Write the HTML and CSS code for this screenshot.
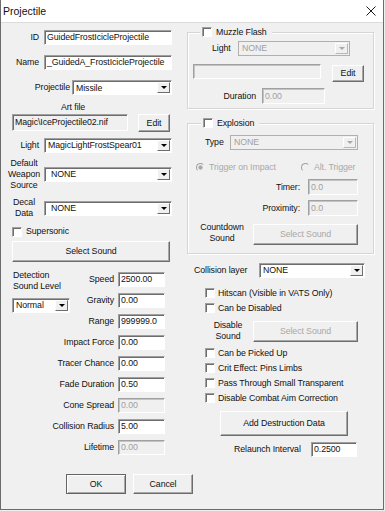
FILE: index.html
```html
<!DOCTYPE html>
<html lang="en">
<head>
  <meta charset="UTF-8">
  <title>Projectile</title>
  <link rel="stylesheet" href="styles.css">
</head>
<body>
  <div class="window">
    <div class="titlebar">
      <span class="title">Projectile</span>
      <svg class="close" width="10" height="10" viewBox="0 0 10 10">
        <path d="M0.5 0.5L9.5 9.5M9.5 0.5L0.5 9.5" stroke="#1a1a1a" stroke-width="1"/>
      </svg>
    </div>

    <div class="panes">
      <!-- left column -->
      <div class="pane-left">
        <div class="row">
          <span class="lbl lbl-main">ID</span>
          <span class="field w128">GuidedFrostIcicleProjectile</span>
        </div>
        <div class="row r-name">
          <span class="lbl lbl-main">Name</span>
          <span class="field w128">_GuidedA_FrostIcicleProjectile</span>
        </div>
        <div class="row r-proj">
          <span class="lbl lbl-proj">Projectile</span>
          <span class="select w100 h16"><span class="select-text">Missile</span><span class="select-btn"></span></span>
        </div>
        <div class="art-label">Art file</div>
        <div class="row r-art">
          <span class="field grey w116 h17">Magic\IceProjectile02.nif</span>
          <span class="btn btn-art">Edit</span>
        </div>
        <div class="row r-light">
          <span class="lbl lbl-main">Light</span>
          <span class="select w128"><span class="select-text">MagicLightFrostSpear01</span><span class="select-btn"></span></span>
        </div>
        <div class="row r-weapon">
          <span class="lbl lbl-stack">Default<br>Weapon<br>Source</span>
          <span class="select w128"><span class="select-text pad">NONE</span><span class="select-btn"></span></span>
        </div>
        <div class="row r-decal">
          <span class="lbl lbl-stack">Decal<br>Data</span>
          <span class="select w128"><span class="select-text pad">NONE</span><span class="select-btn"></span></span>
        </div>
        <div class="row r-super">
          <span class="check"></span>
          <span class="check-text">Supersonic</span>
        </div>
        <div class="btn btn-sound">Select Sound</div>

        <div class="stats">
          <div class="detect">
            <div class="detect-label">Detection<br>Sound Level</div>
            <span class="select w58 h14"><span class="select-text">Normal</span><span class="select-btn"></span></span>
          </div>
          <div class="stat"><span class="stat-lbl">Speed</span><span class="field w47">2500.00</span></div>
          <div class="stat"><span class="stat-lbl">Gravity</span><span class="field w47">0.00</span></div>
          <div class="stat"><span class="stat-lbl">Range</span><span class="field w47">999999.0</span></div>
          <div class="stat"><span class="stat-lbl">Impact Force</span><span class="field w47">0.00</span></div>
          <div class="stat"><span class="stat-lbl">Tracer Chance</span><span class="field w47">0.00</span></div>
          <div class="stat"><span class="stat-lbl">Fade Duration</span><span class="field w47">0.50</span></div>
          <div class="stat"><span class="stat-lbl">Cone Spread</span><span class="field off w47">0.00</span></div>
          <div class="stat"><span class="stat-lbl">Collision Radius</span><span class="field w47">5.00</span></div>
          <div class="stat"><span class="stat-lbl">Lifetime</span><span class="field off w47">0.00</span></div>
        </div>
      </div>

      <!-- right column -->
      <div class="pane-right">
        <div class="group g-muzzle">
          <div class="group-head head-muzzle"><span class="check"></span><span>Muzzle Flash</span></div>
          <div class="row m-light">
            <span class="lbl-left w26">Light</span>
            <span class="select off w112"><span class="select-text">NONE</span><span class="select-btn"></span></span>
          </div>
          <div class="row m-blank">
            <span class="field off w128"></span>
            <span class="btn btn-edit">Edit</span>
          </div>
          <div class="row m-dur">
            <span class="lbl lbl-dur">Duration</span>
            <span class="field off w63 h16">0.00</span>
          </div>
        </div>

        <div class="group g-expl">
          <div class="group-head head-expl"><span class="check"></span><span>Explosion</span></div>
          <div class="row e-type">
            <span class="lbl-left w25">Type</span>
            <span class="select off w128"><span class="select-text">NONE</span><span class="select-btn"></span></span>
          </div>
          <div class="row e-radio">
            <span class="radio-item first"><span class="radio on"></span><span class="radio-text">Trigger on Impact</span></span>
            <span class="radio-item"><span class="radio"></span><span class="radio-text">Alt. Trigger</span></span>
          </div>
          <div class="row e-timer">
            <span class="lbl lbl-timer">Timer:</span>
            <span class="field off w50 h16">0.0</span>
          </div>
          <div class="row e-prox">
            <span class="lbl lbl-timer">Proximity:</span>
            <span class="field off w50 h16">0.0</span>
          </div>
          <div class="row e-count">
            <span class="lbl lbl-stack lbl-count">Countdown<br>Sound</span>
            <span class="btn off btn-pick">Select Sound</span>
          </div>
        </div>

        <div class="row r-coll">
          <span class="lbl-left w65">Collision layer</span>
          <span class="select w106 h14"><span class="select-text">NONE</span><span class="select-btn"></span></span>
        </div>
        <div class="check-row c-first"><span class="check"></span><span class="check-text">Hitscan (Visible in VATS Only)</span></div>
        <div class="check-row"><span class="check"></span><span class="check-text">Can be Disabled</span></div>
        <div class="row r-dis">
          <span class="lbl lbl-stack lbl-dis">Disable<br>Sound</span>
          <span class="btn off btn-pick">Select Sound</span>
        </div>
        <div class="check-row c-group"><span class="check"></span><span class="check-text">Can be Picked Up</span></div>
        <div class="check-row"><span class="check"></span><span class="check-text">Crit Effect: Pins Limbs</span></div>
        <div class="check-row"><span class="check"></span><span class="check-text">Pass Through Small Transparent</span></div>
        <div class="check-row"><span class="check"></span><span class="check-text">Disable Combat Aim Correction</span></div>
        <div class="btn btn-destr">Add Destruction Data</div>
        <div class="row r-relaunch">
          <span class="lbl-left w77">Relaunch Interval</span>
          <span class="field w46">0.2500</span>
        </div>
      </div>
    </div>

    <div class="actions">
      <span class="btn btn-action btn-default">OK</span>
      <span class="btn btn-action">Cancel</span>
    </div>
  </div>
</body>
</html>
```

FILE: styles.css
```css
* {
  box-sizing: border-box;
}
html, body {
  margin: 0;
  background: #f0f0f0;
}
body {
  font-family: "Liberation Sans", Arial, sans-serif;
  font-size: 8.8px;
  letter-spacing: -0.1px;
  line-height: 1;
  color: #111;
}
.window {
  width: 384px;
  height: 510px;
  background: #f0f0f0;
  border: 1px solid #6b6b6b;
  border-top: 0;
}
.titlebar {
  height: 23px;
  display: flex;
  align-items: center;
  justify-content: space-between;
  padding: 0 7px 0 2px;
  background: #fff;
  border-bottom: 1px solid #dcdcdc;
}
.title {
  font-size: 10.5px;
  letter-spacing: 0;
}
.close {
  display: block;
}

/* main columns */
.panes {
  display: flex;
  align-items: flex-start;
  padding: 7px 0 0 7px;
}
.pane-left {
  width: 167px;
}
.pane-right {
  width: 187px;
  margin-left: 12px;
}
.row {
  display: flex;
  align-items: center;
}

/* labels */
.lbl {
  text-align: right;
  white-space: nowrap;
}
.lbl-main {
  width: 36px;
  padding-right: 5px;
}
.lbl-proj {
  width: 64px;
  padding-right: 2px;
}
.lbl-stack {
  width: 32px;
  margin-right: 4px;
  text-align: center;
  line-height: 11px;
}
.lbl-left {
  white-space: nowrap;
}
.lbl-dur {
  width: 74px;
  padding-right: 6px;
}
.lbl-timer {
  width: 120px;
  padding-right: 8px;
}

/* sunken text box */
.field {
  display: block;
  height: 15px;
  padding: 0 2px;
  line-height: 13px;
  white-space: nowrap;
  overflow: hidden;
  background: #fff;
  border: 1px solid;
  border-color: #a0a0a0 #fff #fff #a0a0a0;
  box-shadow: inset 1px 1px #6d6d6d;
}
.field.grey {
  background: #f0f0f0;
}
.field.off {
  background: #f0f0f0;
  color: #a0a0a0;
  box-shadow: inset 1px 1px #c4c4c4;
}
.h14 { height: 14px; }
.h16 { height: 16px; line-height: 14px; }
.h17 { height: 17px; line-height: 15px; }
.w25 { width: 25px; }
.w26 { width: 26px; }
.w46 { width: 46px; }
.w47 { width: 47px; }
.w50 { width: 50px; }
.w58 { width: 58px; }
.w63 { width: 63px; }
.w65 { width: 65px; }
.w77 { width: 77px; }
.w100 { width: 100px; }
.w106 { width: 106px; }
.w112 { width: 112px; }
.w116 { width: 116px; }
.w128 { width: 128px; }

/* drop-down list */
.select {
  display: flex;
  height: 15px;
  padding: 0 1px 1px 3px;
  background: #fff;
  border: 1px solid;
  border-color: #a0a0a0 #fff #fff #a0a0a0;
  box-shadow: inset 1px 1px #6d6d6d;
}
.select-text {
  flex: 1;
  align-self: center;
  padding-top: 1px;
  white-space: nowrap;
}
.select-text.pad {
  padding-left: 3px;
}
.select-btn {
  width: 13px;
  margin-top: 1px;
  display: flex;
  align-items: center;
  justify-content: center;
  background: #f0f0f0;
  border: 1px solid;
  border-color: #fff #6d6d6d #6d6d6d #fff;
}
.select-btn::after {
  content: "";
  border-left: 3px solid transparent;
  border-right: 3px solid transparent;
  border-top: 3px solid #000;
}
.select.off {
  background: #f0f0f0;
  color: #a0a0a0;
  border-color: #b0b0b0;
  box-shadow: none;
}
.select.off .select-btn {
  border-color: #fff #b8b8b8 #b8b8b8 #fff;
}
.select.off .select-btn::after {
  border-top-color: #a8a8a8;
}

/* raised push button */
.btn {
  display: flex;
  align-items: center;
  justify-content: center;
  background: #f0f0f0;
  border: 1px solid;
  border-color: #fff #6d6d6d #6d6d6d #fff;
  box-shadow: inset -1px -1px #a8a8a8;
  white-space: nowrap;
}
.btn.off {
  color: #a8a8a8;
}
.btn-art {
  width: 32px;
  height: 18px;
  margin-left: 10px;
}
.btn-edit {
  width: 32px;
  height: 17px;
  margin: 1px 0 0 11px;
}
.btn-sound {
  width: 158px;
  height: 21px;
  margin: 3px 0 0 4px;
}
.btn-pick {
  width: 105px;
  height: 21px;
}
.btn-destr {
  width: 128px;
  height: 25px;
  margin: 7px 0 0 33px;
}
.btn-action {
  width: 60px;
  height: 20px;
}
.btn-default {
  border-color: #646464;
  box-shadow: inset 1px 1px #fff, inset -1px -1px #a8a8a8;
}

/* check boxes and radios */
.check {
  flex: none;
  width: 10px;
  height: 10px;
  background: #fff;
  border: 1px solid;
  border-color: #a0a0a0 #fff #fff #a0a0a0;
  box-shadow: inset 1px 1px #6d6d6d;
}
.check-text {
  margin-left: 4px;
  white-space: nowrap;
}
.check-row {
  display: flex;
  align-items: center;
  height: 12px;
  margin: 3px 0 0 18px;
}
.check-row .check-text {
  margin-left: 3px;
}
.c-first {
  margin-top: 9px;
}
.c-group {
  margin-top: 5px;
}
.radio-item {
  display: flex;
  align-items: center;
  color: #a8a8a8;
  white-space: nowrap;
}
.radio-item.first {
  width: 105px;
}
.radio {
  width: 9px;
  height: 9px;
  border-radius: 50%;
  border: 1px solid;
  border-color: #a0a0a0 #f0f0f0 #f0f0f0 #a0a0a0;
}
.radio.on {
  background: radial-gradient(circle, #a8a8a8 0 1.8px, #f0f0f0 2.4px);
}
.radio-text {
  margin-left: 4px;
}

/* left column rows */
.r-name { margin-top: 10px; }
.r-proj { margin-top: 10px; }
.art-label {
  margin-top: 6px;
  padding-left: 53px;
  line-height: 12px;
}
.r-art {
  margin-top: 1px;
  align-items: flex-start;
}
.r-art .field {
  margin-left: 4px;
}
.r-light { margin-top: 6px; }
.r-weapon { margin-top: 5px; }
.r-decal { margin-top: 6px; }
.r-super {
  height: 13px;
  margin: 6px 0 0 4px;
}

.stats {
  width: 157px;
  margin-top: 10px;
}
.detect {
  float: left;
  margin: -2px 0 0 5px;
}
.detect-label {
  line-height: 11px;
}
.detect .select {
  margin: 6px 0 0 -1px;
}
.stat {
  display: flex;
  justify-content: flex-end;
  align-items: center;
  height: 15px;
  margin-bottom: 6px;
}
.stat:last-child {
  margin-bottom: 0;
}
.stat-lbl {
  margin-right: 4px;
  white-space: nowrap;
}

/* group boxes */
.group {
  border: 1px solid #d5d5d5;
  box-shadow: inset 1px 1px #fff, 1px 1px #fff;
}
.group-head {
  display: flex;
  align-items: center;
  width: fit-content;
  height: 12px;
  margin-top: -7px;
  padding: 0 5px 0 2px;
  background: #f0f0f0;
}
.group-head .check {
  margin-right: 4px;
}
.g-muzzle {
  margin-top: 2px;
  padding-bottom: 4px;
}
.head-muzzle { margin-left: 12px; }
.m-light { margin: 3px 0 0 24px; }
.m-blank {
  margin: 8px 0 0 5px;
  align-items: flex-start;
}
.m-dur { margin-top: 6px; }

.g-expl {
  margin-top: 14px;
  padding-bottom: 8px;
}
.head-expl { margin-left: 13px; }
.e-type { margin: 6px 0 0 17px; }
.e-radio {
  height: 12px;
  margin: 11px 0 0 8px;
}
.e-timer { margin-top: 6px; }
.e-prox { margin-top: 5px; }
.e-count {
  height: 23px;
  margin-top: 6px;
  align-items: flex-end;
}
.lbl-count {
  width: 62px;
  margin: 0 0 1px 3px;
  align-self: center;
}

/* right column rows below the groups */
.r-coll { margin: 9px 0 0 7px; }
.r-dis { margin: 6px 0 0 16px; }
.lbl-dis {
  width: 50px;
  margin-right: 0;
}
.r-relaunch { margin: 6px 0 0 47px; }

/* OK / Cancel */
.actions {
  display: flex;
  gap: 7px;
  margin-top: 17px;
  padding-left: 65px;
}
```
